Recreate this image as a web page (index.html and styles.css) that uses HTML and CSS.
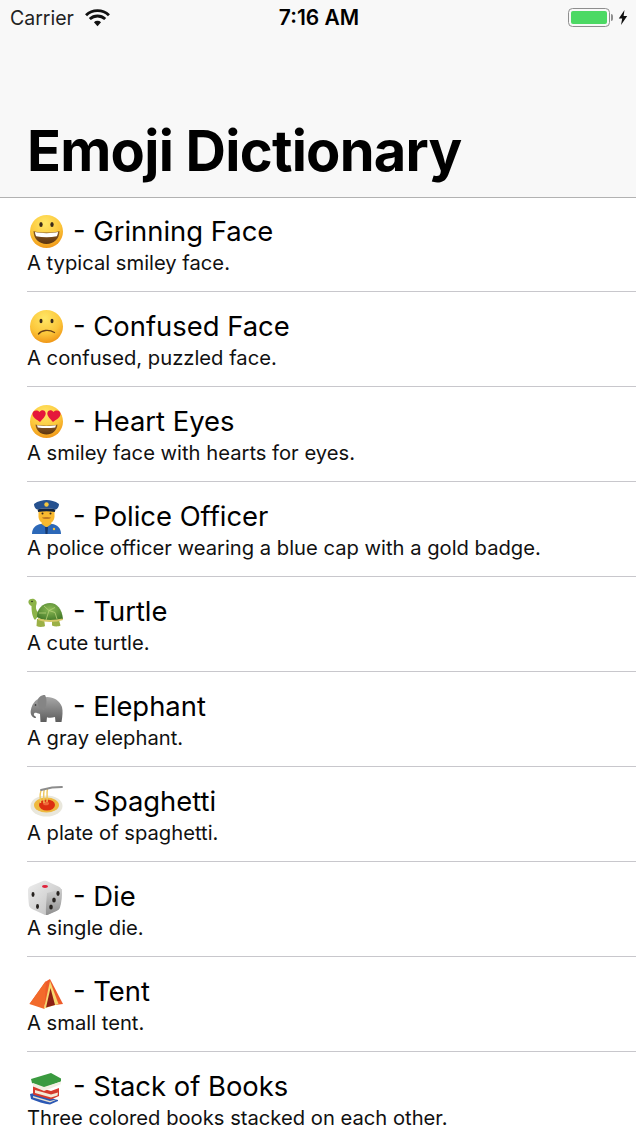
FILE: index.html
```html
<!DOCTYPE html>
<html lang="en">
<head>
<meta charset="utf-8">
<title>Emoji Dictionary</title>
<link rel="stylesheet" href="styles.css">
</head>
<body>
<svg class="defs" width="0" height="0" aria-hidden="true">
<defs>
<radialGradient id="face" cx="45%" cy="25%" r="80%"><stop offset="0" stop-color="#ffe766"/><stop offset=".6" stop-color="#fcc63a"/><stop offset="1" stop-color="#ee8f12"/></radialGradient>
<radialGradient id="shell" cx="50%" cy="35%" r="70%"><stop offset="0" stop-color="#8dbb55"/><stop offset="1" stop-color="#3e7526"/></radialGradient>
<linearGradient id="eleph" x1="0" y1="0" x2="0" y2="1"><stop offset="0" stop-color="#a8a8a8"/><stop offset="1" stop-color="#5c5c5c"/></linearGradient>
<linearGradient id="dice" x1="0" y1="0" x2="1" y2="1"><stop offset="0" stop-color="#eeeeee"/><stop offset="1" stop-color="#bcbcbc"/></linearGradient>
<linearGradient id="diceside" x1="0" y1="0" x2="0" y2="1"><stop offset="0" stop-color="#cfcfcf"/><stop offset="1" stop-color="#8f8f8f"/></linearGradient>
<linearGradient id="mouth" x1="0" y1="0" x2="0" y2="1"><stop offset="0" stop-color="#8a5a24"/><stop offset="1" stop-color="#5c3410"/></linearGradient>
</defs>
</svg>
<header class="nav">
  <div class="status">
    <div class="status-left">
      <span class="carrier">Carrier</span>
      <svg class="wifi" width="25" height="18" viewBox="0 0 24 17"><path d="M12 16.500l-3.400-4a5 5 0 0 1 6.800 0z" fill="#111"/><path d="M1 5.800a16 16 0 0 1 22 0M4.600 9.500a11 11 0 0 1 14.800 0" fill="none" stroke="#111" stroke-width="2.800"/></svg>
    </div>
    <span class="time">7:16 AM</span>
    <div class="status-right">
      <span class="battery"><span class="battery-fill"></span></span>
      <span class="battery-nub"></span>
      <svg class="bolt" width="10" height="15" viewBox="0 0 10 15"><path d="M6.500 0L.8 8.400h3.400L3 15l6.200-9H5.600z" fill="#111"/></svg>
    </div>
  </div>
  <h1 class="title">Emoji Dictionary</h1>
</header>
<main class="list">
  <article class="row">
    <div class="row-head">
      <svg class="emoji" viewBox="0 0 36 36"><circle cx="19.500" cy="17.500" r="16.500" fill="url(#face)"/><ellipse cx="14" cy="10.500" rx="1.700" ry="2.500" fill="#3a2a1a"/><ellipse cx="25" cy="10.500" rx="1.700" ry="2.500" fill="#3a2a1a"/><path d="M6.500 17c5 2 21 2 26 0 0 8-6 13-13 13s-13-5-13-13z" fill="url(#mouth)"/><path d="M8 18c6 1.500 17 1.500 23 0-.1 1.800-.5 3-1.200 4.300-6.500 1.200-14 1.200-20.600 0C8.500 21 8.100 19.800 8 18z" fill="#fff"/></svg>
      <span class="name">- Grinning Face</span>
    </div>
    <p class="desc">A typical smiley face.</p>
  </article>
  <article class="row">
    <div class="row-head">
      <svg class="emoji" viewBox="0 0 36 36"><circle cx="19.500" cy="17.500" r="16.500" fill="url(#face)"/><ellipse cx="14" cy="12" rx="1.500" ry="2.200" fill="#3a2a1a"/><ellipse cx="25" cy="12" rx="1.500" ry="2.200" fill="#3a2a1a"/><path d="M11.500 25c3-3.800 10-5 16-1.500" fill="none" stroke="#6b4216" stroke-width="1.400" stroke-linecap="round"/></svg>
      <span class="name">- Confused Face</span>
    </div>
    <p class="desc">A confused, puzzled face.</p>
  </article>
  <article class="row">
    <div class="row-head">
      <svg class="emoji" viewBox="0 0 36 36"><circle cx="19.500" cy="17.500" r="16.500" fill="url(#face)"/><path d="M8.500 20.500c4 1.500 18 1.500 22 0-.5 6-5 10-11 10s-10.500-4-11-10z" fill="url(#mouth)"/><path d="M10 21.300c5.500 1 13.500 1 19 0l-.8 2.200c-5.500.8-11.900.8-17.400 0z" fill="#fff"/><path d="M13 18C9.500 15.500 5 13 5.500 9.500c.4-3 4.500-4 7-1.500 2-3 6-2 6.200 1.300.2 3-3.200 6-5.700 8.700z" fill="#e5173b"/><path d="M26 18c-2.500-2.700-5.900-5.700-5.700-8.700.2-3.300 4.200-4.300 6.200-1.300 2.500-2.500 6.600-1.500 7 1.500.5 3.500-4 6-7.500 8.500z" fill="#e5173b"/></svg>
      <span class="name">- Heart Eyes</span>
    </div>
    <p class="desc">A smiley face with hearts for eyes.</p>
  </article>
  <article class="row">
    <div class="row-head">
      <svg class="emoji" viewBox="0 0 36 36"><path d="M5 35c0-6 4-9.500 9-10h11c5 .5 9 4 9 10z" fill="#2c68b8"/><path d="M14.500 25l5 3.500 5-3.500-1-3.500h-8z" fill="#f4b92e"/><path d="M18 28h3l-.5 7h-2z" fill="#17396e"/><circle cx="27" cy="30" r="1.200" fill="#f2c23c"/><path d="M11.500 12h16v5.500c0 4.500-3.500 7.500-8 7.500s-8-3-8-7.500z" fill="#f9b92f"/><path d="M15 18.500c2-.8 7-.8 9 0-.6 2-8.400 2-9 0z" fill="#c07a22"/><circle cx="15.500" cy="14.500" r="1" fill="#3a2a1a"/><circle cx="23.500" cy="14.500" r="1" fill="#3a2a1a"/><path d="M7 5c4-3 8.500-4 12.500-4s8.500 1 12.500 4c0 3-1.500 4.500-3 5.500-5-1.200-14-1.200-19 0C8.500 9.500 7 8 7 5z" fill="#25518f"/><path d="M10.500 10.500c5-1.300 13-1.300 18 0l-.7 2.500c-5-1-11.600-1-16.600 0z" fill="#10233f"/><circle cx="19.500" cy="5.500" r="2.200" fill="#f4c63f"/></svg>
      <span class="name">- Police Officer</span>
    </div>
    <p class="desc">A police officer wearing a blue cap with a gold badge.</p>
  </article>
  <article class="row">
    <div class="row-head">
      <svg class="emoji" viewBox="0 0 36 36"><path d="M1.500 7c1-2.500 5-3 7-1 2 2 1 4 .5 6-.5 3 1 6 4 8l-5 6C5 23 4.500 16 4.500 12 2.500 11 1 9.500 1.500 7z" fill="#8cb348"/><circle cx="5" cy="7.500" r=".8" fill="#222"/><path d="M10 23c-.500-8 6-14 13-14s12 6 13 16c-7 3-20 2.500-26-2z" fill="url(#shell)"/><path d="M17 12l5 4.500 6-3M22 16.500l-3 9.500M22 16.500l6 2 2 6.500M12 19l7 0" fill="none" stroke="#b7d27a" stroke-width=".8"/><path d="M10 25h7l1 7c-2 1.200-6 1.200-8.500 0zM25 26h7l1.500 5.500c-2 1.200-6 1.200-8.500 0z" fill="#9bb046"/><path d="M11 24c6 2.500 17 2.500 24.500.5l.5 1.500c-7 2.500-19 2.500-25 0z" fill="#d7c96a"/></svg>
      <span class="name">- Turtle</span>
    </div>
    <p class="desc">A cute turtle.</p>
  </article>
  <article class="row">
    <div class="row-head">
      <svg class="emoji" viewBox="0 0 36 36"><path d="M14 9c8-3 18 0 21 9 1 4 .5 9-.5 15h-6l-.5-5c-3 1-6 1-8 .2l-.5 4.800h-6l-.5-8c-2.500-.5-4-1.500-5.500-1-1 .8-1 3 1 3.500 1 .5.500 2-1 1.500C4 27.500 3 24 4 20.500 5 16 7.500 10.500 14 9z" fill="url(#eleph)"/><path d="M18 6c-4 0-8 2.500-7.500 7.500.5 3.500 3 7.500 6.500 7.500 2.500-3 3.500-11 1-15z" fill="#858585"/><circle cx="8.500" cy="16" r=".8" fill="#222"/></svg>
      <span class="name">- Elephant</span>
    </div>
    <p class="desc">A gray elephant.</p>
  </article>
  <article class="row">
    <div class="row-head">
      <svg class="emoji" viewBox="0 0 36 36"><ellipse cx="19.500" cy="22" rx="16" ry="10.500" fill="#e9e7dc"/><ellipse cx="19.500" cy="21" rx="12.500" ry="7.500" fill="#eeb93f"/><ellipse cx="20" cy="21" rx="8" ry="5.500" fill="#dc2f10"/><ellipse cx="19" cy="19.500" rx="3" ry="1.800" fill="#ef6a3a"/><path d="M13.500 19c0-5-1.500-9 1-13M17 19c0-5-1-10 .5-14M20 18c.5-4-.5-9 .5-13.500" fill="none" stroke="#edc65c" stroke-width="1.400"/><path d="M14 6l11-2.500 10-.5" stroke="#8c8c8c" stroke-width="1.800" stroke-linecap="round" fill="none"/></svg>
      <span class="name">- Spaghetti</span>
    </div>
    <p class="desc">A plate of spaghetti.</p>
  </article>
  <article class="row">
    <div class="row-head">
      <svg class="emoji" viewBox="0 0 36 36"><path d="M1 11c0-2 1-3 3-4l12-5c1-.5 2.500-.5 3.500 0l12 5.500c2 1 3 2 3 4 0 7-.5 12-2 17-.5 1.500-1.500 2.500-3 3.200l-9 4c-1 .5-2 .5-3 0L5 30c-1.500-1-2.500-2-3-3.500C1.500 22 1 16 1 11z" fill="url(#dice)"/><path d="M20 14l15-4c.3 7-.5 13.500-2 18.500-.5 1.500-1.500 2.500-3 3.200l-9 4c-1 .3-1.500.3-2 .3-.5-7 .5-15 1-22z" fill="url(#diceside)"/><ellipse cx="18" cy="7.500" rx="3" ry="1.400" fill="#e0233c"/><g fill="#26221f"><ellipse cx="6" cy="15.500" rx="1.500" ry="2.400"/><ellipse cx="10.500" cy="27.500" rx="1.500" ry="2.400"/><ellipse cx="31" cy="14.500" rx="1.600" ry="2.400"/><ellipse cx="27" cy="21" rx="1.800" ry="2.500"/><ellipse cx="24" cy="28" rx="1.800" ry="2.500"/></g></svg>
      <span class="name">- Die</span>
    </div>
    <p class="desc">A single die.</p>
  </article>
  <article class="row">
    <div class="row-head">
      <svg class="emoji" viewBox="0 0 36 36"><path d="M2.500 30L18 8l5-3 13 25-8 1z" fill="#ee5b2a"/><path d="M19 7L2.500 30l15 5z" fill="#f26a2b"/><path d="M23 7L17 34.500 31.500 30z" fill="#f6d76f"/><path d="M23.500 14L19 33.500l9-2.500z" fill="#8d1f14"/></svg>
      <span class="name">- Tent</span>
    </div>
    <p class="desc">A small tent.</p>
  </article>
  <article class="row">
    <div class="row-head">
      <svg class="emoji" viewBox="0 0 36 36"><path d="M3 25l4-1 24 7v1l-8 3.500C17 35 10 32.500 4 30z" fill="#2b58b4"/><path d="M6 27l17 5 8-2-8 3.500-17-5z" fill="#e9e2d0"/><path d="M6 17l18 5 8-3v8l-8 3.500-18-5z" fill="#d63a2c"/><path d="M8 21l16 4.500 7-2-.5 3-6.500 2L8 24z" fill="#f4ead6"/><path d="M4 10L24 4l10 5.500v3L17 19 5 14z" fill="#3a9a3f"/><path d="M6 14l11 4 17-5.500-.5 3L17 22 6 17.500z" fill="#f2efe2"/></svg>
      <span class="name">- Stack of Books</span>
    </div>
    <p class="desc">Three colored books stacked on each other.</p>
  </article>
</main>
</body>
</html>
```
FILE: styles.css
```css
* { box-sizing: border-box; }
html, body { margin: 0; padding: 0; height: 100%; }
body {
  width: 636px;
  height: 1132px;
  overflow: hidden;
  background: #fff;
  color: #000;
  font-family: Inter, "Liberation Sans", sans-serif;
}
.defs { display: block; height: 0; }
.nav {
  height: 198px;
  background: #f8f8f8;
  border-bottom: 1px solid #b2b2b2;
  display: flex;
  flex-direction: column;
  justify-content: space-between;
}
.status {
  height: 35px;
  display: grid;
  grid-template-columns: 1fr auto 1fr;
  align-items: center;
  padding: 0 8px 0 10px;
}
.status-left { display: flex; align-items: center; gap: 11px; }
.carrier { font-size: 19.500px; color: #222; }
.time { font-size: 21px; font-weight: 600; }
.status-right { display: flex; align-items: center; justify-content: flex-end; }
.battery {
  width: 42px;
  height: 19px;
  border: 1.500px solid #8e8e8e;
  border-radius: 4.500px;
  padding: 2px;
  display: flex;
}
.battery-fill { flex: 1; background: #4cd964; border-radius: 2px; }
.battery-nub { width: 2px; height: 7px; background: #8e8e8e; margin: 0 5px 0 1px; border-radius: 0 2px 2px 0; }
.bolt { display: block; }
.title {
  margin: 0 0 12px 27px;
  font-size: 56px;
  line-height: 68px;
  font-weight: 700;
  letter-spacing: -.750px;
}
.list { padding-left: 27px; }
.row {
  height: 95px;
  border-bottom: 1px solid #c8c7cc;
  padding-top: 16px;
}
.row:first-child { height: 94px; padding-top: 15px; }
.row:last-child { border-bottom: 0; }
.row-head { display: flex; align-items: center; gap: 10px; height: 38px; }
.emoji { width: 36px; height: 36px; display: block; flex: none; }
.name { font-size: 27.400px; line-height: 38px; margin-top: -2px; }
.desc { margin: 0; font-size: 20.200px; line-height: 24px; color: #111; }
```
